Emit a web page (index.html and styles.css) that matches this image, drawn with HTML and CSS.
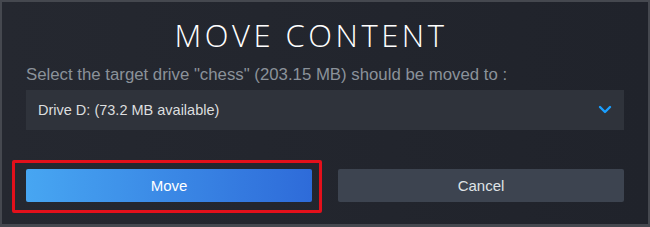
FILE: index.html
```html
<!DOCTYPE html>
<html lang="en">
<head>
    <meta charset="UTF-8">
    <meta name="viewport" content="width=device-width, initial-scale=1.0">
    <title>Move Content</title>
    <link rel="stylesheet" href="styles.css">
</head>
<body>
    <div class="dialog">
        <h1 class="dialog-title">MOVE CONTENT</h1>
        <p class="dialog-label">Select the target drive "chess" (203.15 MB) should be moved to :</p>

        <div class="dropdown">
            <span class="dropdown-text">Drive D: (73.2 MB available)</span>
            <svg class="dropdown-arrow" width="14" height="10" viewBox="0 0 14 10">
                <polyline points="2,2 7,7 12,2" fill="none" stroke="#1a9fff" stroke-width="2.4" stroke-linecap="round" stroke-linejoin="round"/>
            </svg>
        </div>

        <div class="buttons">
            <div class="highlight">
                <button class="btn btn-move">Move</button>
            </div>
            <button class="btn btn-cancel">Cancel</button>
        </div>
    </div>
</body>
</html>
```

FILE: styles.css
```css
body {
    margin: 0;
    background: #1b1d22;
    font-family: "Liberation Sans", Arial, sans-serif;
}

.dialog {
    width: 650px;
    height: 227px;
    box-sizing: border-box;
    border: 2px solid #45484f;
    border-bottom-width: 3px;
    background: linear-gradient(to right, #252830, #22252d 60%, #20232b);
    padding: 0 24px;
}

.dialog-title {
    margin: 0;
    padding: 14px 28px 0 0;
    text-align: center;
    font-family: "Open Sans", sans-serif;
    font-weight: 300;
    font-size: 31px;
    line-height: 38px;
    letter-spacing: 3.5px;
    color: #ffffff;
}

.dialog-label {
    margin: 11px 0 0;
    font-size: 16.8px;
    line-height: 20px;
    color: #8b929a;
}

.dropdown {
    margin-top: 5px;
    height: 40px;
    background: #2f333b;
    display: flex;
    align-items: center;
    justify-content: space-between;
    padding: 0 12px;
}

.dropdown-text {
    font-size: 14.5px;
    color: #dcdedf;
}

.dropdown-arrow {
    display: block;
}

.buttons {
    margin-top: 39px;
    display: flex;
    justify-content: space-between;
}

.highlight {
    position: relative;
}

.highlight::before {
    content: "";
    position: absolute;
    left: -14px;
    top: -9px;
    right: -10px;
    bottom: -11px;
    border: 3px solid #e3101b;
    border-radius: 2px;
}

.btn {
    display: block;
    width: 286px;
    height: 33px;
    border: none;
    border-radius: 2px;
    font-family: "Liberation Sans", Arial, sans-serif;
    font-size: 15px;
    cursor: pointer;
}

.btn-move {
    background: linear-gradient(to right, #47a6f2, #2e6bd9);
    color: #ffffff;
}

.btn-cancel {
    background: #3d4450;
    color: #dfe3e6;
}
```
